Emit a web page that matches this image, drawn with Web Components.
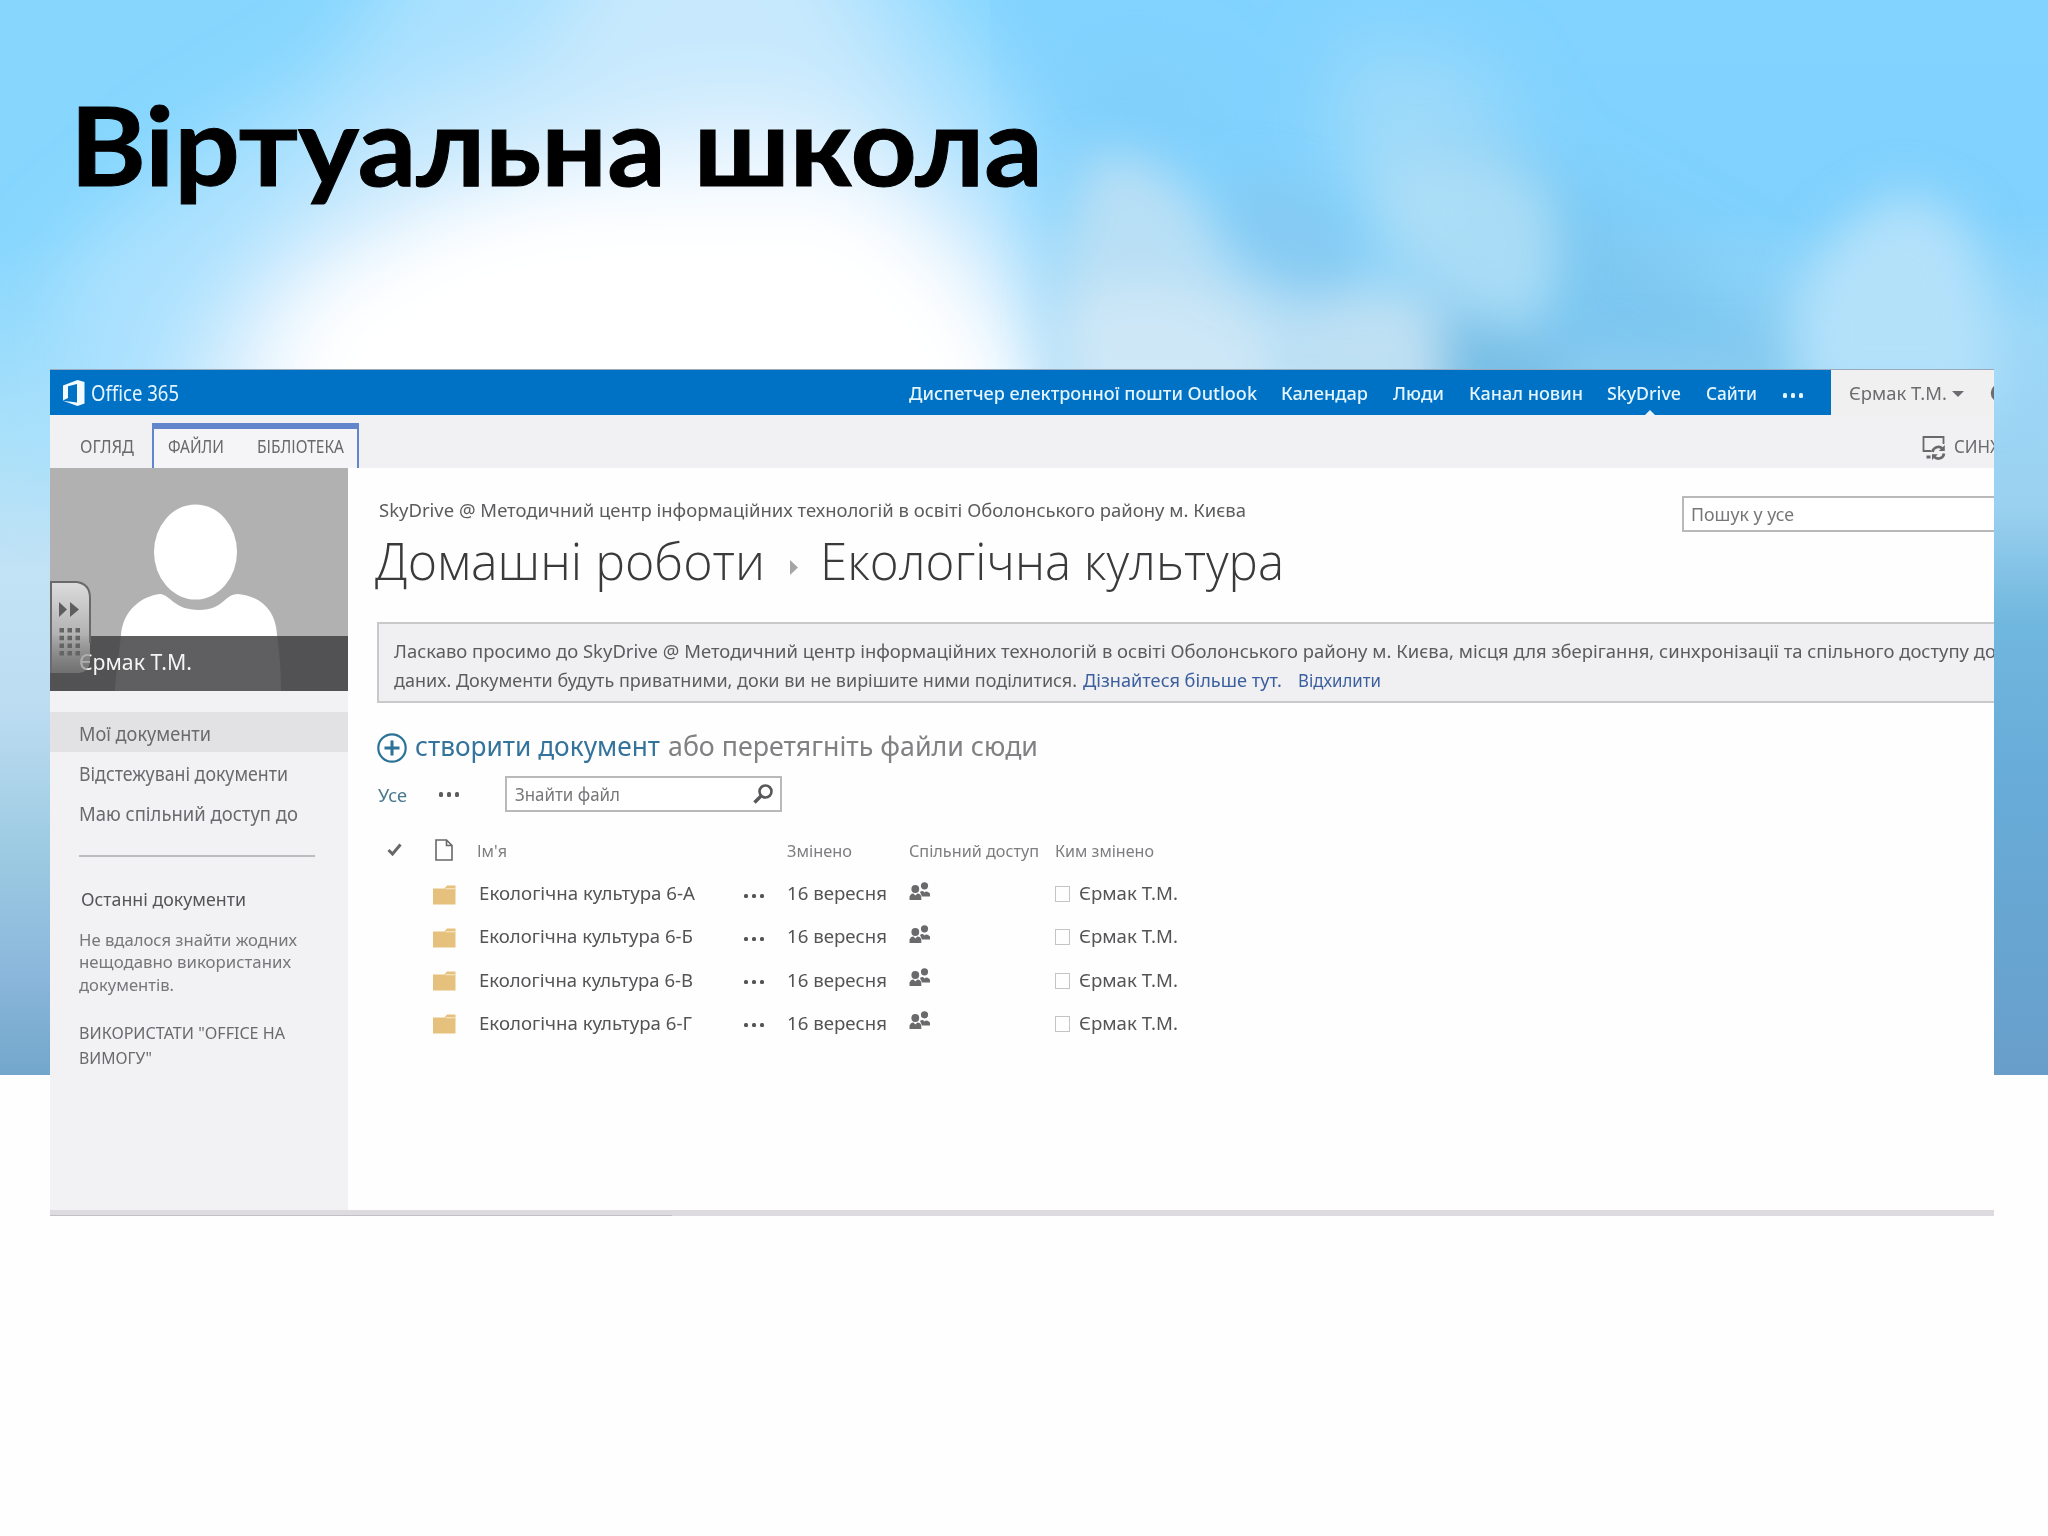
<!DOCTYPE html>
<html lang="uk">
<head>
<meta charset="utf-8">
<title>Віртуальна школа</title>
<style>
html,body{margin:0;padding:0;background:#fefefe}
body{width:2048px;height:1536px;overflow:hidden;font-family:"Noto Sans","Open Sans",sans-serif;color:#5a5a5c}
</style>
</head>
<body>
<school-slide></school-slide>
<script>
const define = (name, css, html, ready) => customElements.define(name, class extends HTMLElement {
  connectedCallback() {
    if (this.shadowRoot) return;
    const root = this.attachShadow({ mode: 'open' });
    root.innerHTML = `<style>*{box-sizing:border-box}${css}</style>` + (typeof html === 'function' ? html(this) : html);
    if (ready) ready(this, root);
  }
});

/* Text run that occupies exactly w pixels, at font size s, after a gap of x pixels */
define('fit-text',
  ':host{display:block;flex:none;white-space:nowrap}span{display:inline-block;transform-origin:0 50%;white-space:pre}',
  '<span><slot></slot></span>',
  (el, root) => {
    const w = +el.getAttribute('w');
    el.style.width = w + 'px';
    if (el.hasAttribute('s')) el.style.fontSize = el.getAttribute('s') + 'px';
    if (el.hasAttribute('x')) el.style.marginLeft = el.getAttribute('x') + 'px';
    const span = root.querySelector('span');
    const n = span.getBoundingClientRect().width;
    if (n) span.style.transform = `scaleX(${w / n})`;
  });

define('more-dots',
  ':host{display:flex;gap:3.8px;flex:none}i{width:4.3px;height:4.3px;border-radius:1.500px;background:currentColor}',
  '<i></i><i></i><i></i>');

define('sky-backdrop',
  ':host{display:block;position:absolute;inset:0 0 auto 0;height:1075px;overflow:hidden;z-index:-1}svg{display:block}',
  `<svg width="2048" height="1075" viewBox="0 0 2048 1075">
  <defs>
    <linearGradient id="l" x1="0" y1="0" x2="0" y2="1"><stop offset="0" stop-color="#86d6fe"/><stop offset=".22" stop-color="#86d6fe"/><stop offset=".4" stop-color="#a8e0fa"/><stop offset=".53" stop-color="#c2e2f5"/><stop offset=".66" stop-color="#bcdcf2"/><stop offset=".79" stop-color="#9dcbe2"/><stop offset=".9" stop-color="#8cb8dc"/><stop offset="1" stop-color="#72a7cb"/></linearGradient>
    <linearGradient id="r" x1="0" y1="0" x2="0" y2="1"><stop offset="0" stop-color="#82d3ff"/><stop offset=".2" stop-color="#80d1fd"/><stop offset=".31" stop-color="#9cd8f8"/><stop offset=".47" stop-color="#9bd1f0"/><stop offset=".58" stop-color="#70b7de"/><stop offset=".72" stop-color="#68acd9"/><stop offset="1" stop-color="#689fca"/></linearGradient>
    <filter id="b" x="-60%" y="-60%" width="220%" height="220%"><feGaussianBlur stdDeviation="38"/></filter>
    <filter id="c" x="-60%" y="-60%" width="220%" height="220%"><feGaussianBlur stdDeviation="24"/></filter>
  </defs>
  <rect width="1000" height="1075" fill="url(#l)"/>
  <rect x="990" width="1058" height="1075" fill="url(#r)"/>
  <g filter="url(#b)">
    <path d="M440-100L880-100L960 30L1030 130L1060 250L1080 480L60 480L60 260L190 150L330 70Z" fill="#aae1fe"/>
    <path d="M640-100L790-100L880 60L970 180L1050 300L1080 480L140 480L190 320L270 230L380 120L540 60Z" fill="#c8e9fd"/>
    <path d="M680 110L800 110L880 160L980 250L1050 480L200 480L250 310L340 240L500 170Z" fill="#e4f3fe"/>
    <path d="M440 215L560 190L850 185L930 250L1010 340L1050 480L250 480L300 300Z" fill="#fff"/>
    <path d="M1350 40L1480 70L1540 190L1560 330L1420 300L1330 150Z" fill="#a0dbfa"/>
    <path d="M1430 150L1570 190L1800 330L1800 480L1430 480Z" fill="#7cc7f1"/>
    <path d="M1060 70L1180 60L1220 140L1120 150Z" fill="#80cffa"/>
  </g>
  <g filter="url(#c)">
    <path d="M1090 150L1150 160L1200 200L1230 270L1300 300L1440 300L1460 420L1070 420L1050 330L1060 250Z" fill="#b8dff5"/>
    <path d="M1060 310L1120 280L1200 290L1270 340L1270 420L1070 420Z" fill="#d2e8f8" opacity=".8"/>
    <path d="M1240 170L1330 200L1370 270L1320 300L1270 290L1225 220Z" fill="#86c9f0" opacity=".85"/>
    <path d="M1380 160L1480 150L1550 190L1560 280L1530 330L1460 310L1390 240Z" fill="#b0dff7" opacity=".85"/>
    <path d="M1310 320L1380 285L1430 320L1440 400L1290 400Z" fill="#bfe0f3"/>
    <path d="M1440 310L1530 340L1560 350L1560 420L1440 420Z" fill="#79bfe5"/>
    <path d="M1560 350L1780 350L1780 420L1560 420Z" fill="#8dccee" opacity=".8"/>
    <path d="M1840 230L1900 190L1960 215L1985 280L2000 400L1800 400L1800 290Z" fill="#b3e1fa"/>
  </g>
  </svg>`);

define('suite-bar',
  `:host{display:flex;height:46px;border-top:1px solid #9aa9bb;background:#0072c6;color:#e4f5fd;line-height:24px;align-items:center;overflow:hidden;font-weight:500}
   svg{display:block;flex:none}
   .current{position:relative}
   .current::after{content:"";position:absolute;left:37px;bottom:-11px;border:6px solid transparent;border-top:0;border-bottom-color:#eef3f8}
   .user{display:flex;align-items:center;align-self:stretch;margin-left:28px;width:164px;flex:none;background:#f1f0f1;color:#6c6c70;font-weight:400;overflow:hidden}
   .caret{border:6px solid transparent;border-bottom:0;border-top-color:#6c6c70;margin:3px 0 0 5px}`,
  `<svg style="margin-left:12px" width="24" height="26" viewBox="0 0 24 26"><path fill="#f1fbff" fill-rule="evenodd" d="M1 5.500L15.500 0 22.500 2V23.500L15.500 26 1 20.800 15 22.500V4L6 6.200V18L1 20.500Z"/></svg>
   <fit-text w="88" s="21.5" x="5" style="font-weight:400">Office 365</fit-text>
   <fit-text w="348" s="18" x="730">Диспетчер електронної пошти Outlook</fit-text>
   <fit-text w="87" s="18" x="24">Календар</fit-text>
   <fit-text w="51" s="18" x="25">Люди</fit-text>
   <fit-text w="114" s="18" x="25">Канал новин</fit-text>
   <fit-text w="74" s="18" x="24" class="current">SkyDrive</fit-text>
   <fit-text w="51" s="18" x="25">Сайти</fit-text>
   <more-dots style="margin:6px 0 0 26px"></more-dots>
   <div class="user"><fit-text w="98" s="18" x="18">Єрмак Т.М.</fit-text><i class="caret"></i>
   <svg style="margin-left:26px" width="20" height="20" viewBox="0 0 20 20"><circle cx="10" cy="10" r="7" fill="none" stroke="#6c6c70" stroke-width="4.500"/></svg></div>`);

define('ribbon-bar',
  `:host{display:flex;height:53px;background:#f1f0f3;color:#69696c;line-height:24px;overflow:hidden}
   fit-text{margin-top:19px}
   .group{display:flex;width:207px;height:45px;margin:8px 0 0 18px;border:2px solid #6385cb;border-top-width:6px;border-bottom:0;background:#f5f5f7}
   .group fit-text{margin-top:5px}
   .sync{display:flex;margin-left:auto;width:72px;flex:none;overflow:hidden}
   svg{display:block;flex:none;margin:20px 0 0}`,
  `<fit-text w="54" s="17.5" x="30">ОГЛЯД</fit-text>
   <div class="group"><fit-text w="56" s="17.5" x="14">ФАЙЛИ</fit-text><fit-text w="87" s="17.5" x="33">БІБЛІОТЕКА</fit-text></div>
   <div class="sync"><svg width="26" height="26" viewBox="0 0 26 26" fill="none" stroke="#69696c" stroke-width="1.800"><path d="M9.500 16H1.500V2H21.500V9"/><path d="M4.500 22H8.500" stroke-width="3"/><path d="M10.500 17A5.800 5.800 0 0 1 20.500 13.800M22 18.500A5.800 5.800 0 0 1 12 21.700" stroke-width="2.600"/><path d="M22.800 10V16H16.800ZM10 25V19.200H15.800Z" fill="#69696c" stroke="none"/></svg>
   <fit-text w="46" s="18" x="6">СИНХ</fit-text></div>`);

define('profile-photo',
  `:host{display:block;position:relative;height:223px;background:#b1b1b1;overflow:hidden}
   svg{display:block}
   .name{position:absolute;left:0;right:0;bottom:0;height:55px;background:linear-gradient(rgba(64,64,66,.84),rgba(64,64,66,.84));color:#f4f4f4;line-height:30px;padding-top:11px}
   .handle{position:absolute;left:0;top:113px}`,
  `<svg width="298" height="223" viewBox="0 0 298 223"><ellipse cx="145.500" cy="84" rx="41.500" ry="47.500" fill="#fff"/><path d="M65 223C66 205 68 196 71 167C73 142 92 128 110 126C121 127 124 142 149 142C174 142 174 126 188 126C210 128 226 142 227 167C230 190 231 205 231 223Z" fill="#fff"/></svg>
   <div class="name"><fit-text w="113" s="21.5" x="29">Єрмак Т.М.</fit-text></div>
   <svg class="handle" width="42" height="94" viewBox="0 0 42 94"><defs><linearGradient id="g" x2="0" y2="1"><stop stop-color="#dcdcdc"/><stop offset=".55" stop-color="#b4b4b4"/><stop offset="1" stop-color="#858585" stop-opacity=".6"/></linearGradient></defs>
   <path d="M1 1H27Q40 3 40 17V80Q39 91 29 92H2Z" fill="url(#g)"/><path d="M1 92V1H27Q40 3 40 17V62" fill="none" stroke="#6a6a6a" stroke-width="2"/>
   <path d="M9 21L17 28.500 9 36ZM20 21L29 28.500 20 36Z" fill="#5d5d5d"/>
   <g fill="#646464"><path id="d" d="M9.500 47h4.500v4.500h-4.500zM17.500 47h4.500v4.500h-4.500zM25.500 47h4.500v4.500h-4.500z"/><use href="#d" y="7.700"/><use href="#d" y="15.400"/><use href="#d" y="23"/></g></svg>`);

define('side-nav',
  `:host{display:block;width:298px;flex:none;background:#f2f1f4;color:#6a6a6d}
   .item{height:40.300px;line-height:30px;display:flex;align-items:center;padding-top:3px}
   .on{margin-top:21px;background:#e2e1e3}
   hr{margin:22px 0 0 29px;width:236px;height:2px;border:0;background:#bcbcc0}
   .head{margin-top:29px;line-height:26px;color:#555558}
   .note{margin-top:17px;line-height:22.600px;color:#77777a}
   .office{margin-top:23px;line-height:25.200px}`,
  `<profile-photo></profile-photo>
   <div class="item on"><fit-text w="132" s="19" x="29">Мої документи</fit-text></div>
   <div class="item"><fit-text w="209" s="19" x="29">Відстежувані документи</fit-text></div>
   <div class="item"><fit-text w="219" s="19" x="29">Маю спільний доступ до</fit-text></div>
   <hr>
   <div class="head"><fit-text w="165" s="18.5" x="31">Останні документи</fit-text></div>
   <div class="note"><fit-text w="218" s="17" x="29">Не вдалося знайти жодних</fit-text><fit-text w="212" s="17" x="29">нещодавно використаних</fit-text><fit-text w="95" s="17" x="29">документів.</fit-text></div>
   <div class="office"><fit-text w="206" s="17" x="29">ВИКОРИСТАТИ "OFFICE НА</fit-text><fit-text w="73" s="17" x="29">ВИМОГУ"</fit-text></div>`);

define('search-box',
  `:host{display:flex;align-items:center;justify-content:space-between;border:2px solid #b9b9bc;background:#fff;color:#77777a;line-height:24px;flex:none}`,
  '<slot></slot>');

define('page-head',
  `:host{display:flex;justify-content:space-between;height:154px}
   .left{padding-top:30px}
   .crumb{line-height:24px;color:#5c5c5f;margin-left:31px}
   .title{display:flex;margin:8px 0 0 27px;line-height:60px;color:#3a3a3c;font-family:"Open Sans","Noto Sans",sans-serif;font-weight:300}
   svg{display:block;margin:30px 22px 0 25px}
   search-box{width:312px;height:36px;margin-top:28px;border-right:0}`,
  `<div class="left"><fit-text class="crumb" w="867" s="18">SkyDrive @ Методичний центр інформаційних технологій в освіті Оболонського району м. Києва</fit-text>
   <div class="title"><fit-text w="390" s="52">Домашні роботи</fit-text><svg width="8" height="15" viewBox="0 0 8 15"><path d="M0 0L8 7.500 0 15Z" fill="#a5a5a8"/></svg><fit-text w="464" s="52">Екологічна культура</fit-text></div></div>
   <search-box><fit-text w="103" s="18" x="7">Пошук у усе</fit-text></search-box>`);

define('welcome-note',
  `:host{display:block;height:81px;margin-left:29px;border:2px solid #c9c9cc;border-right:0;background:#f0eff1;padding:13px 0 0 15px;line-height:28.500px;color:#5c5c5f;overflow:hidden}
   div{display:flex}a{color:#3a5f9f}`,
  `<fit-text w="1602" s="18">Ласкаво просимо до SkyDrive @ Методичний центр інформаційних технологій в освіті Оболонського району м. Києва, місця для зберігання, синхронізації та спільного доступу до</fit-text>
   <div><fit-text w="683" s="18">даних. Документи будуть приватними, доки ви не вирішите ними поділитися.</fit-text><a><fit-text w="199" s="18" x="6">Дізнайтеся більше тут.</fit-text></a><a><fit-text w="83" s="18" x="16">Відхилити</fit-text></a></div>`);

define('doc-actions',
  `:host{display:block}
   .create{display:flex;align-items:center;height:40px;margin:25px 0 0 29px;line-height:32px}
   .create fit-text{margin-bottom:6px}
   .filter{display:flex;align-items:center;height:37px;margin:8px 0 0 30px;line-height:24px}
   svg{display:block;flex:none}
   more-dots{margin-left:32px;color:#5d5d60}
   search-box{width:277px;height:36px;margin:-1px 0 0 46px;padding-right:7px}`,
  `<div class="create"><svg width="30" height="30" viewBox="0 0 30 30" fill="none" stroke="#2b7296"><circle cx="15" cy="15" r="13.700" stroke-width="2.200"/><path d="M15 7.500V22.500M7.500 15H22.500" stroke-width="3"/></svg>
   <fit-text w="245" s="28" x="8" style="color:#34739b">створити документ</fit-text><fit-text w="370" s="28" x="8" style="color:#818184">або перетягніть файли сюди</fit-text></div>
   <div class="filter"><fit-text w="29" s="18" style="color:#48788e">Усе</fit-text><more-dots></more-dots>
   <search-box><fit-text w="105" s="18" x="8">Знайти файл</fit-text><svg width="20" height="20" viewBox="0 0 20 20" fill="none" stroke="#58585b"><circle cx="12.500" cy="7.500" r="6" stroke-width="2.600"/><path d="M8 12L1.500 18.500" stroke-width="3.400"/></svg></search-box></div>`);

const COLS = 'display:grid;grid-template-columns:55px 46px 265px 44px 121px 146px auto;align-items:center;padding-left:30px;';

define('list-head',
  `:host{${COLS}height:30px;margin-top:23px;line-height:24px;color:#7e7e81}svg{display:block}`,
  `<svg style="margin:-4px 0 0 9px" width="15" height="13" viewBox="0 0 15 13"><path d="M1.500 7L5.500 11 13.500 1.500" fill="none" stroke="#68686b" stroke-width="3"/></svg>
   <svg style="margin:-3px 0 0 2px" width="18" height="22" viewBox="0 0 18 22"><path d="M1 1H11.500L17 6.500V21H1ZM11.500 1V6.500H17" fill="none" stroke="#68686b" stroke-width="1.600"/></svg>
   <fit-text w="30" s="16" x="-2">Ім'я</fit-text><span></span>
   <fit-text w="65" s="16" x="-1">Змінено</fit-text><fit-text w="130" s="16">Спільний доступ</fit-text><fit-text w="99" s="16">Ким змінено</fit-text>`);

define('file-row',
  `:host{${COLS}height:43.200px;line-height:26px;color:#545457}svg{display:block}
   more-dots{margin-top:5px}.by{display:flex;align-items:center}
   .by i{width:15px;height:16px;border:1.500px solid #c4c4c7;margin-top:2px}`,
  el => `<span></span>
   <svg style="margin-top:3px" width="23" height="20" viewBox="0 0 23 20"><path d="M0 3.500H11.500L14 .5H22.500V19.500H0Z" fill="#e5c17d"/><path d="M12.500 3.700H22.500" stroke="#f4e3bf" stroke-width="1.200"/></svg>
   <fit-text w="${el.getAttribute('w')}" s="18.5">${el.getAttribute('name')}</fit-text>
   <more-dots></more-dots>
   <fit-text w="100" s="18.5" x="-1">16 вересня</fit-text>
   <svg style="margin:-4px 0 0 0" width="22" height="19" viewBox="0 0 22 19" fill="#6a6a6d"><circle cx="15.500" cy="3.800" r="3.600"/><path d="M11 10Q13.500 8 15.500 10.500 17.500 8 21 11.500V14.500H13Z"/><circle cx="6.300" cy="7" r="3.900"/><path d="M.5 18V14.500Q2 11 4.500 11.500L6.300 13.500 8.500 11.500Q11.500 11.500 12.300 14.500V18Z"/></svg>
   <div class="by"><i></i><fit-text w="99" s="18.5" x="9">Єрмак Т.М.</fit-text></div>`);

define('sky-drive',
  `:host{display:block;width:1944px;height:847px;margin-left:50px;background:#fefefe;overflow:hidden}
   .body{display:flex;height:742px}
   main{flex:1;min-width:0}
   .list{padding-top:5.700px}
   .foot{height:6px;background:#dddbdf}
   .foot i{display:block;width:622px;height:6px;border-bottom:1px solid #c2c0c4}`,
  `<suite-bar></suite-bar><ribbon-bar></ribbon-bar>
   <div class="body"><side-nav></side-nav>
   <main><page-head></page-head><welcome-note></welcome-note><doc-actions></doc-actions>
   <list-head></list-head>
   <div class="list"><file-row name="Екологічна культура 6-А" w="216"></file-row><file-row name="Екологічна культура 6-Б" w="214"></file-row><file-row name="Екологічна культура 6-В" w="214"></file-row><file-row name="Екологічна культура 6-Г" w="213"></file-row></div>
   </main></div>
   <div class="foot"><i></i></div>`);

define('school-slide',
  `:host{display:block;position:relative;width:2048px;height:1536px;overflow:hidden;z-index:0}
   h1{margin:0;height:369px;padding:73px 0 0 70px;font-family:Lato,"Open Sans",sans-serif;font-weight:700;color:#000;line-height:140px;font-size:110px;-webkit-text-stroke:1px #000}`,
  `<sky-backdrop></sky-backdrop><h1><fit-text w="973" s="110">Віртуальна школа</fit-text></h1><sky-drive></sky-drive>`);
</script>
</body>
</html>
